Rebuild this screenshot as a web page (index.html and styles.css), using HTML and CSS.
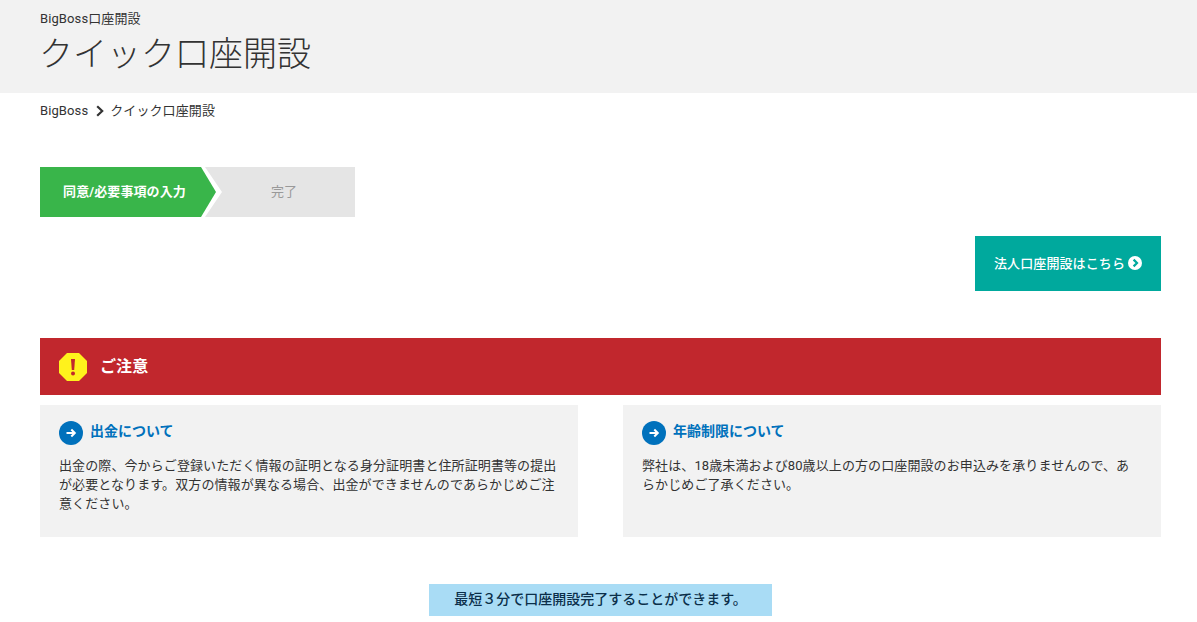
FILE: index.html
```html
<!DOCTYPE html>
<html lang="ja">
<head>
<meta charset="utf-8">
<title>クイック口座開設</title>
<link rel="stylesheet" href="styles.css">
</head>
<body>
<header class="page-head">
  <p class="eyebrow">BigBoss口座開設</p>
  <h1 class="title">クイック口座開設</h1>
</header>
<nav class="crumbs">
  <span>BigBoss</span>
  <svg class="crumb-sep" viewBox="0 0 10 12" width="10" height="12"><path d="M2.2 1.2 7.2 6 2.2 10.8" fill="none" stroke="#333" stroke-width="2.2"/></svg>
  <span>クイック口座開設</span>
</nav>
<main class="content">
  <div class="steps">
    <div class="step step-on">同意/必要事項の入力</div>
    <div class="step step-off">完了</div>
  </div>
  <div class="corp-row">
    <a class="corp-btn"><span class="corp-label">法人口座開設はこちら</span>
      <svg class="corp-icon" viewBox="0 0 14 14" width="14" height="14"><circle cx="7" cy="7" r="7" fill="#fff"/><path d="M5.6 3.6 9 7 5.6 10.4" fill="none" stroke="#00a99d" stroke-width="2.2"/></svg>
    </a>
  </div>
  <div class="notice-bar">
    <svg class="notice-icon" viewBox="0 0 28 28" width="28" height="28"><path d="M8 0H20L28 8V20L20 28H8L0 20V8Z" fill="#fff21c"/><path d="M12 6H16L15.2 17H12.8Z" fill="#c1272d"/><circle cx="14" cy="20.5" r="2" fill="#c1272d"/></svg>
    <span class="notice-label">ご注意</span>
  </div>
  <div class="cards">
    <section class="card">
      <h2 class="card-title">
        <svg viewBox="0 0 24 24" width="24" height="24"><circle cx="12" cy="12" r="12" fill="#0071bc"/><path d="M7.5 12H15.5M12.3 8.5 15.8 12 12.3 15.5" fill="none" stroke="#fff" stroke-width="2"/></svg>
        <span>出金について</span>
      </h2>
      <p class="card-text">出金の際、今からご登録いただく情報の証明となる身分証明書と住所証明書等の提出が必要となります。双方の情報が異なる場合、出金ができませんのであらかじめご注意ください。</p>
    </section>
    <section class="card">
      <h2 class="card-title">
        <svg viewBox="0 0 24 24" width="24" height="24"><circle cx="12" cy="12" r="12" fill="#0071bc"/><path d="M7.5 12H15.5M12.3 8.5 15.8 12 12.3 15.5" fill="none" stroke="#fff" stroke-width="2"/></svg>
        <span>年齢制限について</span>
      </h2>
      <p class="card-text">弊社は、18歳未満および80歳以上の方の口座開設のお申込みを承りませんので、あらかじめご了承ください。</p>
    </section>
  </div>
  <div class="lead-row">
    <p class="lead">最短３分で口座開設完了することができます。</p>
  </div>
</main>
</body>
</html>
```
FILE: styles.css
```css
* { box-sizing: border-box; }
html, body { margin: 0; padding: 0; }
body {
  font-family: Roboto, "Noto Sans CJK JP", sans-serif;
  color: #333;
  background: #fff;
  font-size: 13px;
  letter-spacing: 0.1px;
  height: 622px;
  overflow: hidden;
}
.page-head {
  height: 93px;
  background: #f2f2f2;
  padding: 11px 40px 0;
}
.eyebrow { margin: 0; font-size: 13px; line-height: 15px; }
.title {
  margin: 6px 0 0 -1px;
  font-size: 34px;
  letter-spacing: 0;
  line-height: 44px;
  font-weight: 300;
}
.crumbs {
  display: flex;
  align-items: flex-start;
  padding: 9px 40px 0;
  height: 74px;
  line-height: 18px;
}
.crumb-sep { margin: 3px 5px 0 7px; }
.content { padding: 0 36px 0 40px; }
.steps { display: flex; height: 50px; width: 315px; }
.step {
  display: flex;
  align-items: center;
  justify-content: center;
  font-size: 13px;
  padding-bottom: 3px;
}
.step-on {
  flex: none;
  width: 176px;
  padding-right: 7px;
  margin-right: -11px;
  background: #39b54a;
  color: #fff;
  font-weight: 700;
  clip-path: polygon(0 0, 161px 0, 176px 25px, 161px 50px, 0 50px);
  position: relative;
  z-index: 1;
}
.step-off {
  flex: none;
  width: 150px;
  padding-left: 8px;
  background: #e5e5e5;
  color: #999;
  clip-path: polygon(0 0, 100% 0, 100% 100%, 0 100%, 17px 25px);
}
.corp-row { display: flex; justify-content: flex-end; margin-top: 19px; }
.corp-btn {
  display: flex;
  align-items: center;
  justify-content: center;
  gap: 3px;
  width: 186px;
  height: 55px;
  padding-bottom: 1px;
  background: #00a99d;
  color: #fff;
  font-size: 13px;
  font-weight: 500;
}
.corp-label { position: relative; top: -1px; }
.notice-bar {
  display: flex;
  align-items: center;
  gap: 13px;
  height: 57px;
  margin-top: 47px;
  padding-left: 19px;
  background: #c1272d;
  color: #fff;
  font-size: 16px;
  font-weight: 700;
}
.notice-label { position: relative; top: -2px; }
.cards {
  display: grid;
  grid-template-columns: 538px 538px;
  justify-content: space-between;
  margin-top: 10px;
}
.card {
  height: 132px;
  padding: 16px 19px 0;
  background: #f2f2f2;
}
.card-title {
  display: flex;
  align-items: center;
  gap: 7px;
  margin: 0;
  color: #0071bc;
  font-size: 14px;
  letter-spacing: 0;
  line-height: 24px;
  font-weight: 700;
  height: 24px;
}
.card-title span { position: relative; top: -2px; }
.card-text {
  margin: 11px 0 0;
  font-size: 13px;
  line-height: 19px;
}
.lead-row { display: flex; justify-content: center; margin-top: 47px; }
.lead {
  margin: 0;
  width: 343px;
  height: 32px;
  background: #a9dcf5;
  color: #0b2f4a;
  font-size: 14px;
  letter-spacing: 0;
  font-weight: 500;
  line-height: 30px;
  text-align: center;
}
```
